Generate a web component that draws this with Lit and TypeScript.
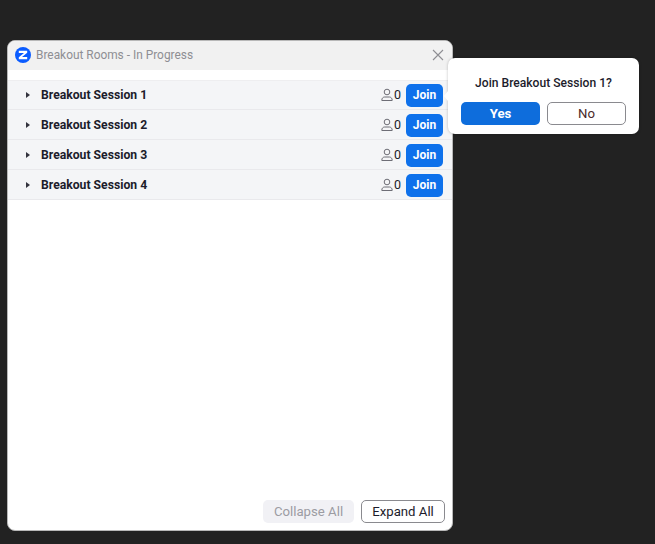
import {LitElement, html, css} from 'lit';
import {customElement} from 'lit/decorators.js';

const sessions = ['Breakout Session 1', 'Breakout Session 2', 'Breakout Session 3', 'Breakout Session 4'];

@customElement('app-root')
export class AppRoot extends LitElement {
  static styles = css`
    :host {
      display: block;
      position: relative;
      width: 655px;
      height: 544px;
      overflow: hidden;
      background: #222222;
      font-family: Roboto, 'Noto Sans', sans-serif;
      font-size: 12px;
      color: #1c1c2b;
    }
    .window {
      position: absolute;
      left: 7px;
      top: 40px;
      width: 446px;
      height: 491px;
      box-sizing: border-box;
      display: flex;
      flex-direction: column;
      background: #fff;
      border: 1px solid #b8b8b8;
      border-radius: 8px;
      overflow: hidden;
    }
    .title {
      height: 29px;
      flex: none;
      box-sizing: border-box;
      display: flex;
      align-items: center;
      padding: 0 8px 1px 7px;
      gap: 5px;
      background: #f1f1f1;
      color: #8e8e93;
      font-size: 11.9px;
    }
    .title .name {
      flex: 1;
    }
    .logo {
      width: 16px;
      height: 16px;
      display: block;
    }
    .close {
      width: 12px;
      height: 12px;
      display: block;
    }
    .rows {
      margin-top: 10px;
    }
    .row {
      height: 29px;
      display: flex;
      align-items: center;
      background: #f4f5f7;
      border-bottom: 1px solid #e9e9ec;
      padding: 0 9px 0 18px;
    }
    .row:first-child {
      box-shadow: inset 0 1px 0 #eeeef0;
    }
    .caret {
      width: 0;
      height: 0;
      border-left: 4px solid #33333d;
      border-top: 3px solid transparent;
      border-bottom: 3px solid transparent;
      margin-right: 11px;
    }
    .label {
      flex: 1;
      font-weight: 700;
      font-size: 12.2px;
    }
    .count {
      display: flex;
      align-items: center;
      gap: 1px;
      margin-right: 5px;
      font-size: 12.5px;
    }
    .person {
      width: 12px;
      height: 14px;
      display: block;
    }
    .join {
      width: 37px;
      height: 23px;
      margin-top: 1px;
      display: flex;
      align-items: center;
      justify-content: center;
      border-radius: 5px;
      background: #0e71eb;
      color: #fff;
      font-size: 12px;
      font-weight: 700;
    }
    .footer {
      margin-top: auto;
      display: flex;
      justify-content: flex-end;
      gap: 7px;
      padding: 0 7px 7px 0;
    }
    .btn {
      height: 23px;
      box-sizing: border-box;
      display: flex;
      align-items: center;
      justify-content: center;
      border-radius: 5px;
      font-size: 13.2px;
    }
    .collapse {
      width: 91px;
      background: #f1f1f5;
      color: #9c9ca3;
    }
    .expand {
      width: 84px;
      background: #fff;
      border: 1px solid #8a8a8f;
      color: #1c1c2b;
    }
    .popup {
      position: absolute;
      left: 448px;
      top: 58px;
      width: 191px;
      height: 76px;
      box-sizing: border-box;
      display: flex;
      flex-direction: column;
      align-items: center;
      background: #fff;
      border-radius: 7px;
      padding-top: 17px;
      box-shadow: 0 0 3px rgba(0, 0, 0, 0.25);
    }
    .popup::before {
      content: '';
      position: absolute;
      left: -4px;
      top: 33px;
      width: 0;
      height: 0;
      border-right: 4px solid #fff;
      border-top: 5px solid transparent;
      border-bottom: 5px solid transparent;
    }
    .question {
      font-weight: 500;
      font-size: 12.1px;
      line-height: 16px;
      margin-bottom: 11px;
    }
    .choices {
      display: flex;
      gap: 7px;
    }
    .yes {
      width: 79px;
      background: #0e6ddc;
      color: #fff;
      font-weight: 700;
    }
    .no {
      width: 79px;
      background: #fff;
      border: 1px solid #8a8a8f;
      color: #4a2a2a;
    }
  `;

  private renderRow(name: string) {
    return html`<div class="row">
      <span class="caret"></span>
      <span class="label">${name}</span>
      <span class="count">
        <svg class="person" viewBox="0 0 12 14" fill="none" stroke="#6e6e76" stroke-width="1">
          <circle cx="6" cy="4" r="2.8"></circle>
          <path d="M.8 12.200c0-2 1.400-3.200 2.800-3.200h4.800c1.400 0 2.800 1.200 2.800 3.200v.3H.8z"></path>
        </svg>
        <span>0</span>
      </span>
      <span class="join">Join</span>
    </div>`;
  }

  render() {
    return html`
      <div class="window">
        <div class="title">
          <svg class="logo" viewBox="0 0 16 16">
            <circle cx="8" cy="8" r="8" fill="#0b5cff"></circle>
            <path d="M3.800 3.800h8.400v2L7 10h5.200v2.200H3.800v-2L9 6H3.800z" fill="#fff"></path>
          </svg>
          <span class="name">Breakout Rooms - In Progress</span>
          <svg class="close" viewBox="0 0 12 12" stroke="#8e8e93" stroke-width="1.100">
            <path d="M1 1l10 10M11 1L1 11"></path>
          </svg>
        </div>
        <div class="rows">${sessions.map((s) => this.renderRow(s))}</div>
        <div class="footer">
          <div class="btn collapse">Collapse All</div>
          <div class="btn expand">Expand All</div>
        </div>
      </div>
      <div class="popup">
        <div class="question">Join Breakout Session 1?</div>
        <div class="choices">
          <div class="btn yes">Yes</div>
          <div class="btn no">No</div>
        </div>
      </div>
    `;
  }
}
